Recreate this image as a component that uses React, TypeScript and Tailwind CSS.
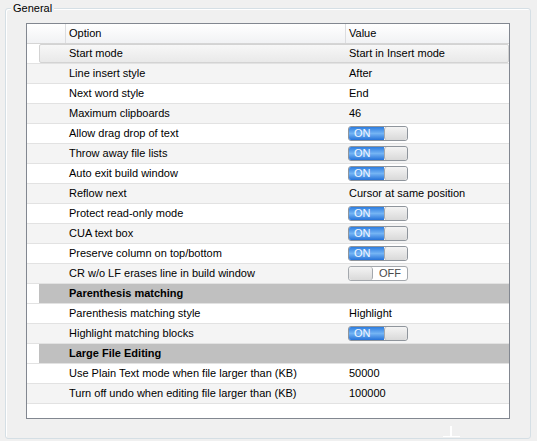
import React from 'react'

type Row =
  | { kind: 'item'; label: string; value?: string; toggle?: boolean; selected?: boolean }
  | { kind: 'section'; label: string }

const rows: Row[] = [
  { kind: 'item', label: 'Start mode', value: 'Start in Insert mode', selected: true },
  { kind: 'item', label: 'Line insert style', value: 'After' },
  { kind: 'item', label: 'Next word style', value: 'End' },
  { kind: 'item', label: 'Maximum clipboards', value: '46' },
  { kind: 'item', label: 'Allow drag drop of text', toggle: true },
  { kind: 'item', label: 'Throw away file lists', toggle: true },
  { kind: 'item', label: 'Auto exit build window', toggle: true },
  { kind: 'item', label: 'Reflow next', value: 'Cursor at same position' },
  { kind: 'item', label: 'Protect read-only mode', toggle: true },
  { kind: 'item', label: 'CUA text box', toggle: true },
  { kind: 'item', label: 'Preserve column on top/bottom', toggle: true },
  { kind: 'item', label: 'CR w/o LF erases line in build window', toggle: false },
  { kind: 'section', label: 'Parenthesis matching' },
  { kind: 'item', label: 'Parenthesis matching style', value: 'Highlight' },
  { kind: 'item', label: 'Highlight matching blocks', toggle: true },
  { kind: 'section', label: 'Large File Editing' },
  { kind: 'item', label: 'Use Plain Text mode when file larger than (KB)', value: '50000' },
  { kind: 'item', label: 'Turn off undo when editing file larger than (KB)', value: '100000' },
]

function Toggle({ on }: { on: boolean }) {
  if (on) {
    return (
      <div className="flex h-[15px] w-[60px] overflow-hidden rounded-[3px] border border-[#8f959c]">
        <div className="flex w-[35px] items-center bg-linear-to-b from-[#2c7de0] via-[#74b4f4] to-[#2572d8] pl-[5px] text-[11px] leading-none text-[#f2f7ff]">
          ON
        </div>
        <div className="flex-1 rounded-[3px] border-l border-[#a4a8ad] bg-linear-to-b from-[#f4f4f4] to-[#d9d9d9]" />
      </div>
    )
  }
  return (
    <div className="flex h-[15px] w-[60px] overflow-hidden rounded-[3px] border border-[#a4a8ad] bg-white">
      <div className="w-[24px] rounded-[3px] border-r border-[#a4a8ad] bg-linear-to-b from-[#f4f4f4] to-[#d9d9d9]" />
      <div className="flex flex-1 items-center pl-[6px] text-[11px] leading-none text-[#4a4a4a]">OFF</div>
    </div>
  )
}

export default function App() {
  let stripe = 0
  return (
    <div className="h-[441px] w-[537px] bg-[#f0f0f0] pt-[8px] pl-[5px] font-['Liberation_Sans',Arial,sans-serif] text-[11px] text-black">
      {/* Group box */}
      <div className="relative h-[431px] w-[526px] rounded-[3px] border border-[#d5dfe5] shadow-[inset_1px_1px_0_#fff]">
        <span className="absolute -top-[8px] left-[5px] bg-[#f0f0f0] px-[2px] leading-[14px]">General</span>

        {/* Property grid */}
        <div className="mt-[14px] ml-[20px] flex h-[396px] w-[484px] flex-col border border-[#828790] bg-white">
          {/* Header */}
          <div className="flex h-[20px] border-b border-[#d5d5d5] bg-linear-to-b from-white to-[#f1f2f4]">
            <div className="w-[39px] border-r border-[#dcdde0]" />
            <div className="flex w-[280px] items-center border-r border-[#dcdde0] pl-[3px]">Option</div>
            <div className="flex flex-1 items-center pl-[3px]">Value</div>
          </div>

          {rows.map((row, i) => {
            if (row.kind === 'section') {
              stripe = 0
              return (
                <div key={i} className="flex h-[20px] border-b border-[#e2e2e2]">
                  <div className="w-[12px] bg-white" />
                  <div className="flex flex-1 items-center bg-[#c0c0c0] pl-[30px] font-bold">{row.label}</div>
                </div>
              )
            }
            if (row.selected) {
              stripe = 1
              return (
                <div key={i} className="flex h-[20px] border-b border-[#e2e2e2] bg-white">
                  <div className="w-[12px] shrink-0" />
                  <div className="flex flex-1 items-center rounded-[2px] border border-[#d3d3d3] bg-linear-to-b from-[#f7f7f7] to-[#e9e9e9]">
                    <div className="w-[306px] shrink-0 pl-[29px]">{row.label}</div>
                    <div className="pl-[3px]">{row.value}</div>
                  </div>
                </div>
              )
            }
            const gray = stripe % 2 === 1
            stripe++
            return (
              <div
                key={i}
                className={`flex h-[20px] items-center border-b border-[#e2e2e2] ${gray ? 'bg-[#f4f4f4]' : 'bg-white'}`}
              >
                <div className="w-[319px] shrink-0 pl-[42px]">{row.label}</div>
                <div className="flex items-center pl-[2px]">
                  {row.toggle === undefined ? <span className="pl-[1px]">{row.value}</span> : <Toggle on={row.toggle} />}
                </div>
              </div>
            )
          })}
        </div>

        {/* splitter grip */}
        <div className="absolute top-[417px] left-[444px] h-[11px] w-[2px] bg-white" />
        <div className="absolute top-[427px] left-[437px] h-[1px] w-[17px] bg-white" />
      </div>
    </div>
  )
}
